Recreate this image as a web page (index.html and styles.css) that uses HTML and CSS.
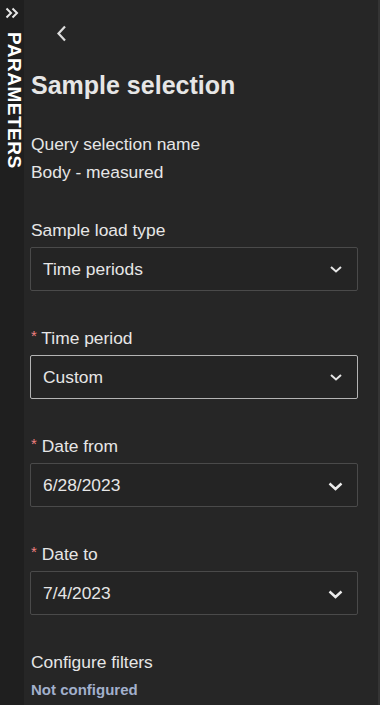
FILE: index.html
```html
<!DOCTYPE html>
<html lang="en">
<head>
  <meta charset="UTF-8" />
  <meta name="viewport" content="width=device-width, initial-scale=1.0" />
  <title>Parameters</title>
  <link rel="stylesheet" href="styles.css">
</head>
<body>
  <div class="rail">
    <svg class="expand" width="14" height="12" viewBox="0 0 14 12">
      <path d="M1.5 1.5 L6 6 L1.5 10.5 M7.5 1.5 L12 6 L7.5 10.5" fill="none" stroke="#e6e6e6" stroke-width="2"/>
    </svg>
    <div class="rail-title">PARAMETERS</div>
  </div>

  <div class="panel">
    <div class="back">
      <svg width="13" height="17" viewBox="0 0 13 17">
        <path d="M10 1.5 L3.5 8.5 L10 15.5" fill="none" stroke="#dcdcdc" stroke-width="2.2"/>
      </svg>
    </div>

    <h1 class="title">Sample selection</h1>

    <div class="info">
      <div class="line">Query selection name</div>
      <div class="line">Body - measured</div>
    </div>

    <div class="field">
      <div class="label">Sample load type</div>
      <div class="select">
        <span>Time periods</span>
        <svg class="caret" width="12" height="7" viewBox="0 0 12 7"><path d="M1 1 L6 5.5 L11 1" fill="none" stroke="#e6e6e6" stroke-width="2"/></svg>
      </div>
    </div>

    <div class="field">
      <div class="label"><span class="req">*</span> Time period</div>
      <div class="select focused">
        <span>Custom</span>
        <svg class="caret" width="12" height="7" viewBox="0 0 12 7"><path d="M1 1 L6 5.5 L11 1" fill="none" stroke="#e6e6e6" stroke-width="2"/></svg>
      </div>
    </div>

    <div class="field">
      <div class="label"><span class="req">*</span> Date from</div>
      <div class="select">
        <span>6/28/2023</span>
        <svg class="caret big" width="15" height="9" viewBox="0 0 15 9"><path d="M1.5 1.5 L7.5 7 L13.5 1.5" fill="none" stroke="#ececec" stroke-width="2.4"/></svg>
      </div>
    </div>

    <div class="field">
      <div class="label"><span class="req">*</span> Date to</div>
      <div class="select">
        <span>7/4/2023</span>
        <svg class="caret big" width="15" height="9" viewBox="0 0 15 9"><path d="M1.5 1.5 L7.5 7 L13.5 1.5" fill="none" stroke="#ececec" stroke-width="2.4"/></svg>
      </div>
    </div>

    <div class="field">
      <div class="label">Configure filters</div>
      <div class="status">Not configured</div>
    </div>
  </div>
</body>
</html>
```

FILE: styles.css
```css
body {
  margin: 0;
  height: 705px;
  display: flex;
  background: #262626;
  color: #e6e6e6;
  font-family: 'Liberation Sans', Arial, sans-serif;
  overflow: hidden;
  border-right: 2px solid #343434;
}
.rail {
  width: 24px;
  flex-shrink: 0;
  background: #1f1f1f;
  display: flex;
  flex-direction: column;
  align-items: center;
  padding-top: 7px;
}
.expand {
  display: block;
}
.rail-title {
  writing-mode: vertical-rl;
  font-weight: bold;
  font-size: 19px;
  line-height: 20px;
  letter-spacing: 0.5px;
  color: #ffffff;
  margin-top: 13px;
  margin-left: 3px;
}
.panel {
  flex-grow: 1;
  padding: 0 20px 0 6px;
}
.back {
  height: 66px;
  display: flex;
  align-items: center;
  padding-left: 25px;
}
.back svg {
  display: block;
  margin-top: 1px;
}
.title {
  margin: 4px 0 0 1px;
  font-size: 25px;
  line-height: 30px;
  font-weight: bold;
  color: #e6e6e6;
}
.info {
  margin-top: 34px;
  display: flex;
  flex-direction: column;
  gap: 8px;
}
.line {
  font-size: 17.4px;
  line-height: 20px;
  padding-left: 1px;
}
.field {
  margin-top: 37px;
}
.info + .field {
  margin-top: 38px;
}
.label {
  height: 20px;
  font-size: 17.4px;
  line-height: 20px;
  padding-left: 1px;
}
.req {
  color: #f08080;
  font-size: 15px;
  line-height: 1;
  vertical-align: 3px;
}
.select {
  margin-top: 7px;
  height: 44px;
  box-sizing: border-box;
  border: 1px solid #4a4a4a;
  border-radius: 2px;
  background: #242424;
  display: flex;
  align-items: center;
  justify-content: space-between;
  padding: 0 14px 0 12px;
  font-size: 17.4px;
}
.select.focused {
  border-color: #b4b4b4;
}
.caret {
  display: block;
  margin-right: 1px;
}
.caret.big {
  margin-right: 0;
  margin-top: 2px;
}
.status {
  margin-top: 9px;
  font-size: 15px;
  font-weight: bold;
  color: #a2b0cc;
  padding-left: 1px;
}
```
